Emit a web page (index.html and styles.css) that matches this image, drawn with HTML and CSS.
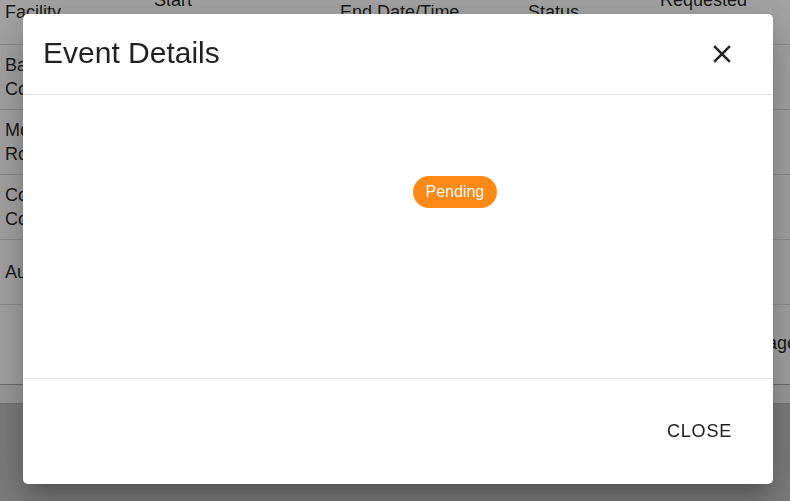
FILE: index.html
```html
<!DOCTYPE html>
<html lang="en">
<head>
<meta charset="utf-8">
<title>Event Details</title>
<link rel="stylesheet" href="styles.css">
</head>
<body>
<div class="page">
  <div class="table">
    <div class="row head">
      <div class="cell c1">Facility</div>
      <div class="cell c2">Start<br>Date/Time</div>
      <div class="cell c3">End Date/Time</div>
      <div class="cell c4">Status</div>
      <div class="cell c5">Requested<br>By</div>
    </div>
    <div class="row">
      <div class="cell c1">Basketball Court</div>
      <div class="cell c2">05/12/2024 09:00</div>
      <div class="cell c3">05/12/2024 11:00</div>
      <div class="cell c4">Pending</div>
      <div class="cell c5">John Smith</div>
    </div>
    <div class="row">
      <div class="cell c1">Meeting Room</div>
      <div class="cell c2">05/13/2024 13:00</div>
      <div class="cell c3">05/13/2024 14:30</div>
      <div class="cell c4">Approved</div>
      <div class="cell c5">Jane Doe</div>
    </div>
    <div class="row">
      <div class="cell c1">Community Court</div>
      <div class="cell c2">05/14/2024 18:00</div>
      <div class="cell c3">05/14/2024 21:00</div>
      <div class="cell c4">Pending</div>
      <div class="cell c5">Alex Lee</div>
    </div>
    <div class="row last">
      <div class="cell c1">Auditorium</div>
      <div class="cell c2">05/15/2024 10:00</div>
      <div class="cell c3">05/15/2024 12:00</div>
      <div class="cell c4">Rejected</div>
      <div class="cell c5">Sam Green</div>
    </div>
    <div class="pager">Rows per page:</div>
    <div class="scrollbar"></div>
  </div>
</div>

<div class="backdrop"></div>

<div class="dialog" role="dialog" aria-labelledby="dlg-title">
  <div class="dialog-head">
    <h2 class="dialog-title" id="dlg-title">Event Details</h2>
    <button class="icon-btn" aria-label="close">
      <svg class="close-icon" viewBox="0 0 24 24" width="30" height="30" aria-hidden="true">
        <path d="M19 6.41 17.59 5 12 10.59 6.41 5 5 6.41 10.59 12 5 17.59 6.41 19 12 13.41 17.59 19 19 17.59 13.41 12z"></path>
      </svg>
    </button>
  </div>
  <div class="dialog-body">
    <span class="chip">Pending</span>
  </div>
  <div class="dialog-actions">
    <button class="text-btn">Close</button>
  </div>
</div>
</body>
</html>
```
FILE: styles.css
```css
* { box-sizing: border-box; }

html, body {
  margin: 0;
  padding: 0;
  height: 100%;
  overflow: hidden;
}

body {
  background: #c3c3c3;
  font-family: "Liberation Sans", Arial, sans-serif;
  color: rgba(0, 0, 0, 0.87);
}

.page {
  width: 100%;
  overflow: hidden;
}

.table {
  margin-top: -20px;
  background: #ffffff;
  width: 100%;
}

.row {
  display: flex;
  height: 65px;
  border-bottom: 1px solid #dcdcdc;
  font-size: 18px;
  line-height: 24px;
}

.row.last { height: 65px; }

.cell {
  flex: none;
  display: flex;
  align-items: center;
  padding-left: 5px;
  white-space: normal;
}

.c1 { width: 149px; padding-right: 34px; }
.c2 { width: 186px; }
.c3 { width: 188px; }
.c4 { width: 132px; }
.c5 { width: 200px; }

.pager {
  height: 79px;
  display: flex;
  align-items: center;
  padding-left: 676px;
  font-size: 18px;
  white-space: nowrap;
  padding-bottom: 2px;
}

.scrollbar {
  height: 20px;
  background: #f2f2f2;
  border-top: 1px solid #a9a9a9;
  border-bottom: 1px solid #b4b4b4;
}

.backdrop {
  position: fixed;
  inset: 0;
  background: rgba(0, 0, 0, 0.36);
}

.dialog {
  position: fixed;
  top: 14px;
  left: 23px;
  width: 750px;
  height: 470px;
  background: #ffffff;
  border-radius: 5px;
  display: flex;
  flex-direction: column;
  box-shadow: 0px 11px 15px -7px rgba(0,0,0,0.2),
              0px 24px 38px 3px rgba(0,0,0,0.14),
              0px 9px 46px 8px rgba(0,0,0,0.12);
}

.dialog-head {
  flex: none;
  height: 81px;
  border-bottom: 1px solid #e0e0e0;
  display: flex;
  align-items: center;
  justify-content: space-between;
  padding: 0 36px 0 20px;
}

.dialog-title {
  margin: 0 0 1px 0;
  font-size: 30px;
  font-weight: 400;
  line-height: 1.15;
  color: rgba(0, 0, 0, 0.87);
}

.icon-btn {
  border: 0;
  background: none;
  padding: 0;
  width: 30px;
  height: 30px;
  display: flex;
  cursor: pointer;
}

.close-icon { fill: #222222; display: block; }

.dialog-body {
  flex: none;
  height: 284px;
  border-bottom: 1px solid #e0e0e0;
  padding: 81px 0 0 390px;
}

.chip {
  display: inline-flex;
  align-items: center;
  height: 32px;
  padding: 0 12.5px;
  border-radius: 16px;
  background: #fd8a16;
  color: #ffffff;
  font-size: 16px;
}

.dialog-actions {
  flex: 1;
  display: flex;
  align-items: center;
  justify-content: flex-end;
  padding-right: 41px;
}

.text-btn {
  border: 0;
  background: none;
  padding: 0;
  font-family: "Liberation Sans", Arial, sans-serif;
  font-size: 18px;
  letter-spacing: 0.8px;
  text-transform: uppercase;
  color: #212121;
  cursor: pointer;
}
```
